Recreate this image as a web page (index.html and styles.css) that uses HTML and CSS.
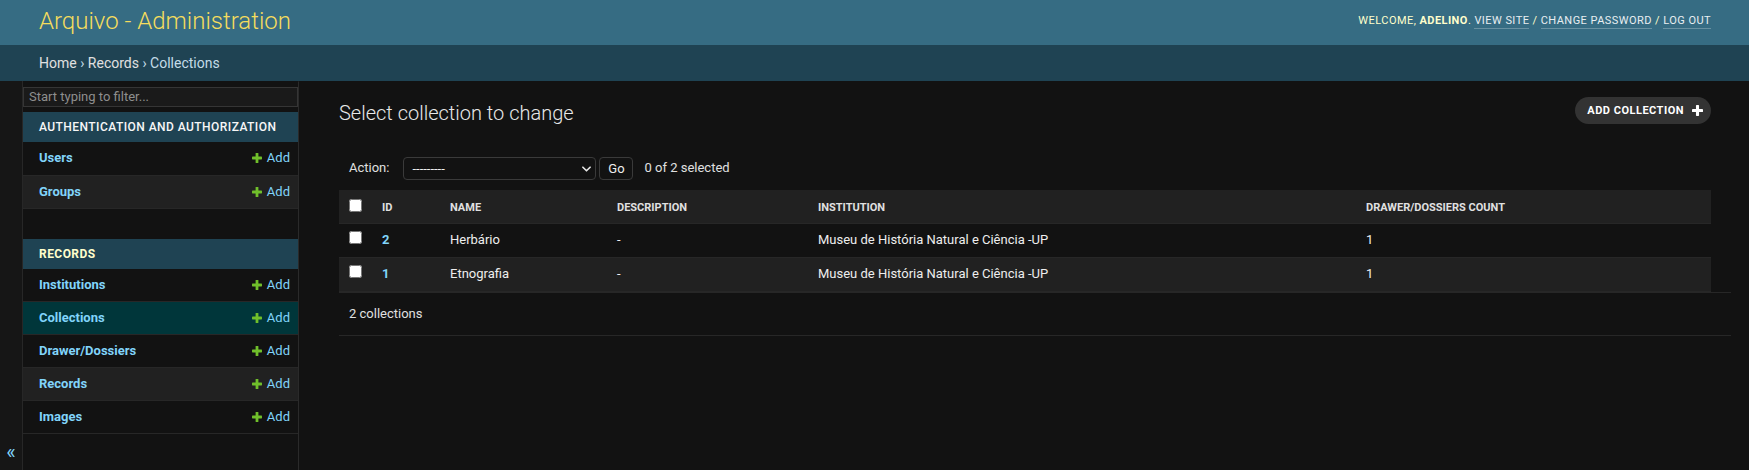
FILE: index.html
```html
<!DOCTYPE html>
<html lang="en">
<head>
<meta charset="utf-8">
<title>Select collection to change | Arquivo - Administration</title>
<link rel="stylesheet" href="styles.css">
</head>
<body>
<div class="page">
  <header class="header">
    <div class="branding">Arquivo - Administration</div>
    <div class="user-tools">Welcome, <strong>adelino</strong>. <a href="#">View site</a> / <a href="#">Change password</a> / <a href="#">Log out</a></div>
  </header>
  <nav class="breadcrumbs"><a href="#">Home</a> › <a href="#">Records</a> › Collections</nav>
  <div class="main">
    <button class="toggle-nav" type="button">«</button>
    <nav class="sidebar">
      <input class="nav-filter" type="search" placeholder="Start typing to filter...">
      <table class="app-module">
        <caption>Authentication and Authorization</caption>
        <tbody>
          <tr><th><a href="#">Users</a></th><td><a class="addlink" href="#"><svg class="plus" viewBox="0 0 10 10"><rect x="3.6" y="0" width="2.8" height="10" rx="0.6"/><rect x="0" y="3.6" width="10" height="2.8" rx="0.6"/></svg>Add</a></td></tr>
          <tr class="row2"><th><a href="#">Groups</a></th><td><a class="addlink" href="#"><svg class="plus" viewBox="0 0 10 10"><rect x="3.6" y="0" width="2.8" height="10" rx="0.6"/><rect x="0" y="3.6" width="10" height="2.8" rx="0.6"/></svg>Add</a></td></tr>
        </tbody>
      </table>
      <table class="app-module current-app">
        <caption>Records</caption>
        <tbody>
          <tr><th><a href="#">Institutions</a></th><td><a class="addlink" href="#"><svg class="plus" viewBox="0 0 10 10"><rect x="3.6" y="0" width="2.8" height="10" rx="0.6"/><rect x="0" y="3.6" width="10" height="2.8" rx="0.6"/></svg>Add</a></td></tr>
          <tr class="current-model"><th><a href="#">Collections</a></th><td><a class="addlink" href="#"><svg class="plus" viewBox="0 0 10 10"><rect x="3.6" y="0" width="2.8" height="10" rx="0.6"/><rect x="0" y="3.6" width="10" height="2.8" rx="0.6"/></svg>Add</a></td></tr>
          <tr><th><a href="#">Drawer/Dossiers</a></th><td><a class="addlink" href="#"><svg class="plus" viewBox="0 0 10 10"><rect x="3.6" y="0" width="2.8" height="10" rx="0.6"/><rect x="0" y="3.6" width="10" height="2.8" rx="0.6"/></svg>Add</a></td></tr>
          <tr class="row2"><th><a href="#">Records</a></th><td><a class="addlink" href="#"><svg class="plus" viewBox="0 0 10 10"><rect x="3.6" y="0" width="2.8" height="10" rx="0.6"/><rect x="0" y="3.6" width="10" height="2.8" rx="0.6"/></svg>Add</a></td></tr>
          <tr><th><a href="#">Images</a></th><td><a class="addlink" href="#"><svg class="plus" viewBox="0 0 10 10"><rect x="3.6" y="0" width="2.8" height="10" rx="0.6"/><rect x="0" y="3.6" width="10" height="2.8" rx="0.6"/></svg>Add</a></td></tr>
        </tbody>
      </table>
    </nav>
    <div class="content">
      <div class="content-head">
        <h1>Select collection to change</h1>
        <a class="object-tool" href="#">Add collection<svg class="plus-white" viewBox="0 0 10 10"><rect x="3.6" y="0" width="2.8" height="10" rx="0.6"/><rect x="0" y="3.6" width="10" height="2.8" rx="0.6"/></svg></a>
      </div>
      <div class="changelist">
        <div class="actions">
          <span class="action-label">Action:</span>
          <span class="select-wrap">
            <select class="action-select"><option>---------</option></select>
            <svg class="chev" viewBox="0 0 10 6"><path d="M1 1 L5 5 L9 1" fill="none" stroke="#e8e8e8" stroke-width="1.8" stroke-linecap="round" stroke-linejoin="round"/></svg>
          </span>
          <button class="go" type="button">Go</button>
          <span class="counter">0 of 2 selected</span>
        </div>
        <table class="result-list">
          <thead>
            <tr>
              <th class="c-check"><input type="checkbox"></th>
              <th class="c-id">ID</th>
              <th class="c-name">Name</th>
              <th class="c-desc">Description</th>
              <th class="c-inst">Institution</th>
              <th class="c-count">Drawer/Dossiers count</th>
            </tr>
          </thead>
          <tbody>
            <tr class="row1">
              <td class="c-check"><input type="checkbox"></td>
              <th class="c-id"><a href="#">2</a></th>
              <td>Herbário</td>
              <td>-</td>
              <td>Museu de História Natural e Ciência -UP</td>
              <td>1</td>
            </tr>
            <tr class="row2">
              <td class="c-check"><input type="checkbox"></td>
              <th class="c-id"><a href="#">1</a></th>
              <td>Etnografia</td>
              <td>-</td>
              <td>Museu de História Natural e Ciência -UP</td>
              <td>1</td>
            </tr>
          </tbody>
        </table>
        <p class="paginator">2 collections</p>
      </div>
    </div>
  </div>
</div>
</body>
</html>
```

FILE: styles.css
```css
* { box-sizing: border-box; }

html, body {
  margin: 0;
  padding: 0;
  height: 100%;
}

body {
  background: #121212;
  color: #eeeeee;
  font-family: Roboto, "Liberation Sans", Arial, sans-serif;
  font-size: 13px;
}

a { text-decoration: none; color: #81d4fa; }

.page {
  display: flex;
  flex-direction: column;
  min-height: 100vh;
}

/* header */
.header {
  display: flex;
  justify-content: space-between;
  align-items: flex-start;
  height: 45px;
  padding: 0 38px 0 39px;
  background: #366c83;
}

.branding {
  margin-top: 7px;
  font-size: 24px;
  font-weight: 300;
  color: #f5dd5d;
}

.user-tools {
  margin-top: 14px;
  font-size: 11px;
  letter-spacing: 0.45px;
  text-transform: uppercase;
  color: #ffffcc;
}

.user-tools strong { font-weight: 700; }

.user-tools a {
  color: #e8eef1;
  border-bottom: 1px solid rgba(255, 255, 255, 0.25);
  padding-bottom: 1px;
}

.breadcrumbs {
  height: 36px;
  padding: 10px 39px;
  background: #1f4353;
  color: #c4dce8;
  font-size: 14px;
}

.breadcrumbs a { color: #e0e0e0; }

/* main */
.main {
  flex: 1;
  display: flex;
}

.toggle-nav {
  flex: 0 0 23px;
  display: flex;
  align-items: flex-end;
  justify-content: center;
  padding: 0 0 8px 0;
  margin: 0;
  border: 0;
  border-right: 1px solid #272727;
  background: #161616;
  color: #81d4fa;
  font-family: Roboto, sans-serif;
  font-size: 20px;
  line-height: 20px;
}

.sidebar {
  flex: 0 0 276px;
  border-top: 1px solid transparent;
  border-right: 1px solid #2a2a2a;
  background: #121212;
}

.nav-filter {
  display: block;
  width: 100%;
  margin: 5px 0;
  padding: 2px 5px;
  border: 1px solid #353535;
  background: #1a1a1a;
  color: #eee;
  font-family: Roboto, sans-serif;
  font-size: 13px;
  line-height: 14px;
  outline: none;
}

.nav-filter::placeholder { color: #8e8e8e; }

.app-module {
  width: 100%;
  border-collapse: collapse;
  margin-bottom: 30px;
}

.app-module caption {
  text-align: left;
  padding: 8px 8px 7px 16px;
  background: #1f4353;
  color: #f7f7f7;
  font-size: 12px;
  line-height: 15px;
  letter-spacing: 0.45px;
  text-transform: uppercase;
  font-weight: 500;
}

.app-module.current-app caption {
  color: #ffffcc;
  font-weight: 700;
}

.app-module th,
.app-module td {
  height: 33px;
  padding: 0 8px 0 16px;
  line-height: 16px;
  border-bottom: 1px solid #272727;
  font-size: 13px;
  vertical-align: middle;
}

.app-module th {
  text-align: left;
  font-weight: 700;
}

.app-module td {
  text-align: right;
  padding-left: 8px;
  white-space: nowrap;
}

.app-module .row2 { background: #212121; }
.app-module .current-model { background: #00363a; }

.addlink {
  display: inline-flex;
  align-items: center;
  gap: 5px;
  height: 16px;
  vertical-align: top;
  color: #81d4fa;
}

.plus {
  width: 10px;
  height: 10px;
  fill: #70bf2b;
}

/* content */
.content {
  flex: 1;
  min-width: 0;
  padding: 20px 38px 20px 40px;
}

.content-head {
  display: flex;
  justify-content: space-between;
  align-items: flex-start;
}

.content-head h1 {
  margin: 0 0 20px;
  font-size: 20px;
  line-height: 24px;
  font-weight: 300;
  color: #e8e8e8;
}

.object-tool {
  display: inline-flex;
  align-items: center;
  height: 27px;
  margin-top: -4px;
  padding: 0 8px 0 12px;
  border-radius: 14px;
  background: #333333;
  color: #ffffff;
  font-size: 11px;
  font-weight: 700;
  letter-spacing: 0.5px;
  text-transform: uppercase;
}

.plus-white {
  width: 11px;
  height: 11px;
  margin-left: 8px;
  fill: #ffffff;
}

.actions {
  display: flex;
  align-items: center;
  padding: 11px 10px 10px;
  line-height: 24px;
  color: #e0e0e0;
  font-size: 13px;
}

.action-label { margin-right: 14px; }

.select-wrap {
  position: relative;
  display: inline-block;
}

.action-select {
  appearance: none;
  -webkit-appearance: none;
  width: 193px;
  height: 23px;
  padding: 0 20px 0 8px;
  border: 1px solid #3a3a3a;
  border-radius: 4px;
  background: #121212;
  color: #eee;
  font-family: Roboto, sans-serif;
  font-size: 13px;
  display: block;
}

.chev {
  position: absolute;
  right: 5px;
  top: 9px;
  width: 9px;
  height: 6px;
}

.go {
  margin-left: 3px;
  width: 34px;
  height: 23px;
  padding: 0;
  border: 1px solid #3a3a3a;
  border-radius: 4px;
  background: #121212;
  color: #eee;
  font-family: Roboto, sans-serif;
  font-size: 13px;
}

.counter { margin-left: 11px; }

.result-list {
  width: 100%;
  border-collapse: collapse;
  table-layout: fixed;
}

.result-list thead th {
  background: #212121;
  padding: 10px 10px 7px;
  line-height: 16px;
  font-size: 11px;
  font-weight: 700;
  text-transform: uppercase;
  text-align: left;
  color: #e0e0e0;
  border-bottom: 1px solid #272727;
}

.result-list td,
.result-list tbody th {
  padding: 8px 10px 9px;
  line-height: 16px;
  font-size: 13px;
  text-align: left;
  color: #eeeeee;
  border-bottom: 1px solid #272727;
}

.result-list tbody th a { font-weight: 700; }

.result-list .row2 { background: #212121; }

.result-list .c-check {
  width: 33px;
  padding-right: 0;
}

.result-list input[type="checkbox"] {
  margin: -3px 0 3px;
  width: 13px;
  height: 13px;
  display: block;
}

.c-id { width: 68px; }
.c-name { width: 167px; }
.c-desc { width: 201px; }
.c-inst { width: 548px; }

.paginator {
  width: 100%;
  box-sizing: content-box;
  margin: 0;
  padding: 10px;
  line-height: 22px;
  font-size: 13px;
  color: #e0e0e0;
  border-top: 1px solid #272727;
  border-bottom: 1px solid #272727;
}
```
